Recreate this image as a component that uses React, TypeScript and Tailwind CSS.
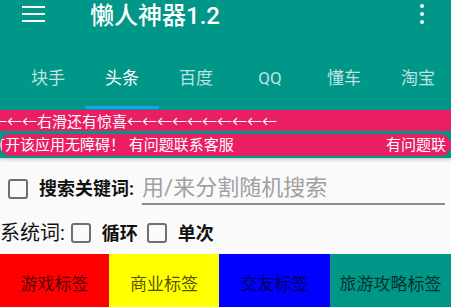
import React from 'react';

const tabs = ['块手', '头条', '百度', 'QQ', '懂车', '淘宝'];

const tags = [
  { label: '游戏标签', cls: 'w-[109px] bg-[#ff0000]' },
  { label: '商业标签', cls: 'w-[110px] bg-[#ffff00]' },
  { label: '交友标签', cls: 'w-[111px] bg-[#0000ff]' },
  { label: '旅游攻略标签', cls: 'flex-1 bg-[#009688]' },
];

function Box() {
  return <div className="w-[20px] h-[20px] shrink-0 rounded-[3px] border-2 border-[#6f6f6f]" />;
}

function App() {
  return (
    <div className="w-[451px] h-[307px] overflow-hidden bg-[#fafafa] font-['Roboto','Noto_Sans_CJK_SC',sans-serif]">
      {/* Toolbar + tabs */}
      <header className="bg-[#009688] pb-px text-white">
        <div className="h-[28px] flex items-center">
          <div className="ml-[22px] w-[23px] flex flex-col gap-[5px]">
            <span className="h-[2px] bg-white" />
            <span className="h-[2px] bg-white" />
            <span className="h-[2px] bg-white" />
          </div>
          <span className="ml-[45px] mt-[3px] text-[24px] font-medium leading-none">懒人神器1.2</span>
          <div className="ml-auto mr-[27px] flex flex-col gap-[4px]">
            <span className="w-[4px] h-[4px] rounded-full bg-white" />
            <span className="w-[4px] h-[4px] rounded-full bg-white" />
            <span className="w-[4px] h-[4px] rounded-full bg-white" />
          </div>
        </div>
        <div className="mt-[24px] flex pl-[11px] whitespace-nowrap">
          {tabs.map((t, i) => (
            <div
              key={t}
              className={
                'w-[74px] shrink-0 h-[57px] flex items-center justify-center border-b-[3px] text-[17px] ' +
                (i === 1 ? 'border-[#1aa3e8] text-white' : 'border-transparent text-white/75')
              }
            >
              {t}
            </div>
          ))}
        </div>
      </header>

      {/* Notices */}
      <div className="relative z-10 bg-[#009688] pb-[2px] shadow-[0_2px_3px_rgba(0,0,0,0.18)] text-white text-[15px] whitespace-nowrap">
        <div className="h-[21px] bg-[#e91e63] overflow-hidden leading-[21px]">
          <span className="ml-[-8px] font-['Noto_Sans_CJK_SC',sans-serif]">←←←右滑还有惊喜←←←←←←←←←←</span>
        </div>
        <div className="mt-[3px] h-[22px] bg-[#e91e63] rounded-full overflow-hidden flex leading-[22px]">
          <span className="ml-[-10px]">打开该应用无障碍！ 有问题联系客服</span>
          <span className="ml-auto mr-[5px]">有问题联</span>
        </div>
      </div>

      {/* Search keyword */}
      <div className="mt-[17px] h-[30px] flex items-center">
        <div className="ml-[8px] mb-[3px]">
          <Box />
        </div>
        <span className="ml-[11px] mb-[3px] text-[18px] font-bold text-[#111]">搜索关键词:</span>
        <div className="ml-[8px] mr-[6px] flex-1 h-[30px] border-b-2 border-[#8a8a8a] flex items-center">
          <span className="text-[22px] text-[#a0a0a0] leading-none mb-[2px]">用/来分割随机搜索</span>
        </div>
      </div>

      {/* System words */}
      <div className="mt-[13px] h-[30px] flex items-center text-[#111]">
        <span className="text-[20px]">系统词:</span>
        <div className="ml-[6px]">
          <Box />
        </div>
        <span className="ml-[11px] text-[18px] font-bold">循环</span>
        <div className="ml-[9px]">
          <Box />
        </div>
        <span className="ml-[11px] text-[18px] font-bold">单次</span>
      </div>

      {/* Tag buttons */}
      <div className="mt-[6px] flex">
        {tags.map((b) => (
          <div key={b.label} className={b.cls + ' h-[62px] flex items-center justify-center text-[17px] text-black/70'}>
            {b.label}
          </div>
        ))}
      </div>
    </div>
  );
}

export default App;
